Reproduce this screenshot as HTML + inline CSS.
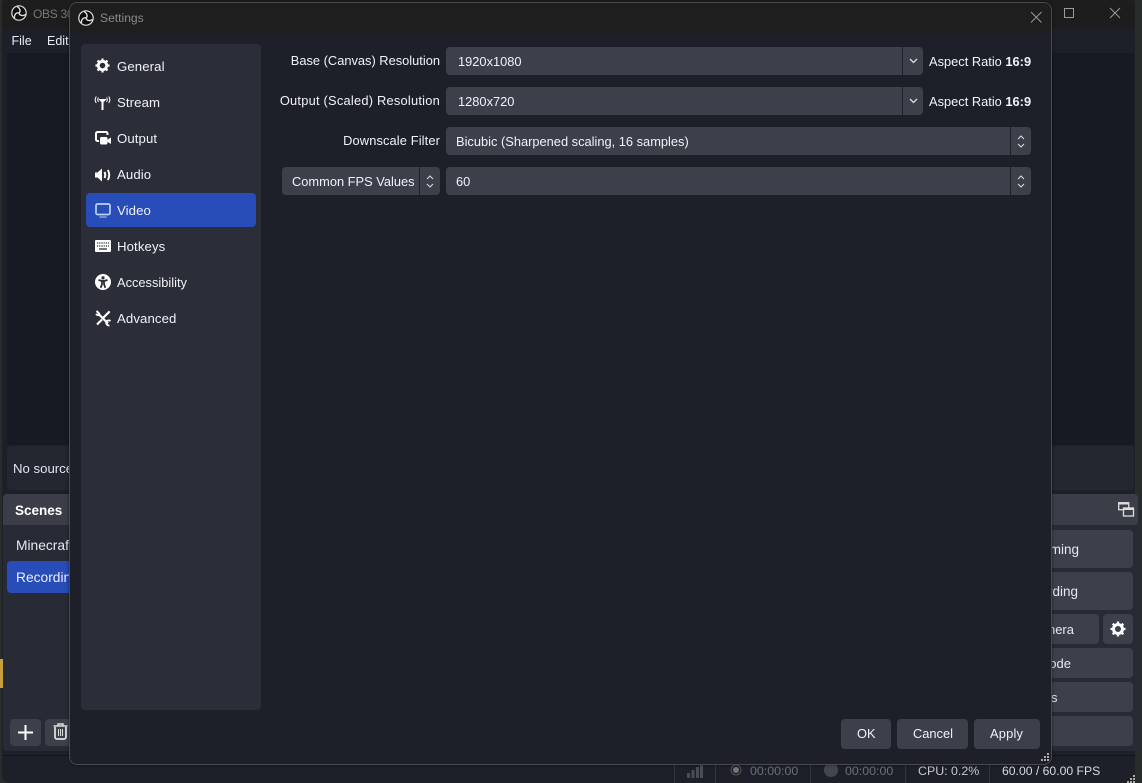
<!DOCTYPE html>
<html><head><meta charset="utf-8"><style>
html,body{margin:0;padding:0;background:#262d2b}
#r{position:relative;width:1142px;height:783px;overflow:hidden;background:#262d2b;font-family:"Liberation Sans",sans-serif;font-size:12.85px;color:#fff}
.a{position:absolute;white-space:nowrap}
.b{position:absolute;background:#3c404b;border-radius:4px}
.t{position:absolute;white-space:nowrap;line-height:18px}
.s{font-size:13.200px;letter-spacing:.1px}
svg{position:absolute;overflow:visible}
</style></head><body><div id="r">
<!-- main window -->
<div class="a" style="left:2px;top:-6px;width:1133px;height:789px;background:#1e2029;border-radius:8px"></div>
<div class="a" style="left:2px;top:0;width:1133px;height:29px;background:#1d1d1d;border-radius:8px 8px 0 0"></div>
<svg style="left:11px;top:5px" width="16" height="16" viewBox="0 0 16 16"><circle cx="8" cy="8" r="7.200" fill="#0e0e0e" stroke="#ddd" stroke-width="1.200"/><g fill="none" stroke="#ddd" stroke-width="1.400"><path d="M8 8C9.800 6.500 9.500 3.500 6 1.500"/><path transform="rotate(120 8 8)" d="M8 8C9.800 6.500 9.500 3.500 6 1.500"/><path transform="rotate(240 8 8)" d="M8 8C9.800 6.500 9.500 3.500 6 1.500"/></g></svg>
<div class="t" style="left:33px;top:5px;color:#777;font-size:12px;letter-spacing:-.3px">OBS 30</div>
<div class="t" style="left:11.500px;top:32px;color:#e8ecf5;font-size:12.500px">File</div>
<div class="t" style="left:47px;top:32px;color:#e8ecf5;font-size:12.500px">Edit</div>
<div class="a" style="left:7px;top:53px;width:1127px;height:392px;background:#171923"></div>
<svg style="left:1064px;top:8px" width="60" height="12"><rect x="0.500" y="0.500" width="9" height="9" fill="none" stroke="#999"/><path d="M46 0l10 10M56 0l-10 10" stroke="#999" fill="none"/></svg>
<div class="a" style="left:7px;top:446px;width:1127px;height:44px;background:#242630;border-radius:4px"></div>
<div class="t" style="left:13px;top:460px;color:#dfe6f5;font-size:13.200px">No source</div>
<!-- scenes dock -->
<div class="a" style="left:3px;top:494px;width:100px;height:257px;background:#282a35;border-radius:4px"></div>
<div class="a" style="left:3px;top:494px;width:100px;height:31px;background:#3b3e49;border-radius:4px 4px 0 0"></div>
<div class="t" style="left:15px;top:502px;font-weight:bold;font-size:13.500px">Scenes</div>
<div class="t" style="left:16px;top:537px;color:#e6e8ef;font-size:13.800px">Minecraft</div>
<div class="a" style="left:7px;top:561px;width:80px;height:32px;background:#284cb8;border-radius:4px"></div>
<div class="t" style="left:16px;top:569px;color:#e8eeff;font-size:13.800px">Recording</div>
<div class="b" style="left:10px;top:719px;width:31px;height:27px"></div>
<svg style="left:18px;top:725px" width="15" height="15"><path d="M7.500 0v15M0 7.500h15" stroke="#fff" stroke-width="2"/></svg>
<div class="b" style="left:45px;top:719px;width:31px;height:27px"></div>
<svg style="left:53px;top:723px" width="15" height="17" fill="none" stroke="#ddd"><path d="M0.500 3h14M5 3V1h5v2" stroke-width="1.500"/><path d="M2 4v10a2 2 0 0 0 2 2h7a2 2 0 0 0 2-2V4" stroke-width="1.800"/><path d="M5.500 6v7M7.500 6v7M9.500 6v7"/></svg>
<div class="a" style="left:0;top:659px;width:3px;height:29px;background:#c7a23c"></div>
<!-- controls dock -->
<div class="a" style="left:1000px;top:494px;width:138px;height:257px;background:#282a35;border-radius:4px"></div>
<div class="a" style="left:1000px;top:494px;width:138px;height:31px;background:#3b3e49;border-radius:4px"></div>
<svg style="left:1118px;top:502px" width="16" height="16" fill="none" stroke="#ddd" stroke-width="1.300"><rect x="0.700" y="0.700" width="10" height="7"/><rect x="5.500" y="6" width="10" height="8" fill="#3b3e49"/><path d="M0.700 1.500h10M5.500 7h10" stroke-width="2"/></svg>
<div class="b" style="left:1000px;top:530px;width:133px;height:38px"></div>
<div class="t" style="right:63px;top:541px;color:#e6e8ef;font-size:13.500px">ming</div>
<div class="b" style="left:1000px;top:572px;width:133px;height:38px"></div>
<div class="t" style="right:64px;top:583px;color:#e6e8ef;font-size:13.500px">rding</div>
<div class="b" style="left:1000px;top:614px;width:99px;height:30px"></div>
<div class="t" style="right:68px;top:621px;color:#e6e8ef;font-size:13px">nera</div>
<div class="b" style="left:1103px;top:614px;width:30px;height:30px"></div>
<svg style="left:1110px;top:621px" width="16" height="16" viewBox="0 0 16 16"><circle cx="8" cy="8" r="4.500" fill="none" stroke="#fff" stroke-width="3"/><path d="M8 0.500v15M0.500 8h15M2.700 2.700l10.600 10.600M13.300 2.700L2.700 13.300" stroke="#fff" stroke-width="2.300" stroke-dasharray="2.500 10 2.500"/></svg>
<div class="b" style="left:1000px;top:648px;width:133px;height:30px"></div>
<div class="t" style="right:71px;top:655px;color:#e6e8ef;font-size:13px">ode</div>
<div class="b" style="left:1000px;top:682px;width:133px;height:30px"></div>
<div class="t" style="left:1051px;top:689px;color:#e6e8ef;font-size:13px">s</div>
<div class="b" style="left:1000px;top:716px;width:133px;height:30px"></div>
<!-- status bar -->
<div class="a" style="left:2px;top:755px;width:1133px;height:1px;background:#14151b"></div>
<div class="a" style="left:674px;top:764px;width:1px;height:19px;background:#33353f"></div>
<div class="a" style="left:715px;top:764px;width:1px;height:19px;background:#33353f"></div>
<div class="a" style="left:810px;top:764px;width:1px;height:19px;background:#33353f"></div>
<div class="a" style="left:905px;top:764px;width:1px;height:19px;background:#33353f"></div>
<div class="a" style="left:989px;top:764px;width:1px;height:19px;background:#33353f"></div>
<svg style="left:687px;top:764px" width="16" height="14" fill="#4b4d55"><rect x="0" y="9" width="3" height="5"/><rect x="4.500" y="6" width="3" height="8"/><rect x="9" y="3" width="3" height="11"/><rect x="13" y="0" width="3" height="14"/></svg>
<svg style="left:729px;top:763px" width="14" height="14" fill="none" stroke="#555"><circle cx="7" cy="7" r="3" fill="#777" stroke="none"/><circle cx="7" cy="7" r="5"/></svg>
<div class="t" style="left:750px;top:762px;color:#6d6f77;font-size:12.400px">00:00:00</div>
<div class="a" style="left:824px;top:763px;width:14px;height:14px;border-radius:50%;background:#44464e"></div>
<div class="t" style="left:845px;top:762px;color:#6d6f77;font-size:12.400px">00:00:00</div>
<div class="t" style="left:918px;top:762px;color:#c6c8ce;font-size:12.400px">CPU: 0.2%</div>
<div class="t" style="left:1002px;top:762px;color:#d8dae0;font-size:12.200px">60.00 / 60.00 FPS</div>
<svg style="left:1127px;top:775px" width="8" height="8" fill="#aaa"><rect x="6" y="0" width="2" height="2"/><rect x="3" y="3" width="2" height="2"/><rect x="6" y="3" width="2" height="2"/><rect x="0" y="6" width="2" height="2"/><rect x="3" y="6" width="2" height="2"/><rect x="6" y="6" width="2" height="2"/></svg>
<!-- settings dialog -->
<div class="a" style="left:69px;top:2px;width:981px;height:761px;background:#1e2029;border:1px solid #484a50;border-radius:8px;overflow:hidden;box-shadow:0 0 3px rgba(0,0,0,.5)"><div style="height:31px;background:#1e1e1e"></div></div>
<svg style="left:78px;top:10px" width="16" height="16" viewBox="0 0 16 16"><circle cx="8" cy="8" r="7.200" fill="#0e0e0e" stroke="#ddd" stroke-width="1.200"/><g fill="none" stroke="#ddd" stroke-width="1.400"><path d="M8 8C9.800 6.500 9.500 3.500 6 1.500"/><path transform="rotate(120 8 8)" d="M8 8C9.800 6.500 9.500 3.500 6 1.500"/><path transform="rotate(240 8 8)" d="M8 8C9.800 6.500 9.500 3.500 6 1.500"/></g></svg>
<div class="t" style="left:100px;top:9px;color:#8a8a8a;font-size:12.100px">Settings</div>
<svg style="left:1031px;top:12px" width="11" height="11"><path d="M0 0l10.500 10.500M10.500 0L0 10.500" stroke="#999" fill="none"/></svg>
<!-- sidebar -->
<div class="a" style="left:81px;top:44px;width:180px;height:666px;background:#2b2d38;border-radius:4px"></div>
<div class="a" style="left:86px;top:193px;width:170px;height:34px;background:#284cb8;border-radius:4px"></div>
<div class="t s" style="left:117px;top:58px;color:#f0f2f8">General</div>
<div class="t s" style="left:117px;top:94px;color:#f0f2f8">Stream</div>
<div class="t s" style="left:117px;top:130px;color:#f0f2f8">Output</div>
<div class="t s" style="left:117px;top:166px;color:#f0f2f8">Audio</div>
<div class="t s" style="left:117px;top:202px;color:#f0f2f8">Video</div>
<div class="t s" style="left:117px;top:238px;color:#f0f2f8">Hotkeys</div>
<div class="t" style="left:117px;top:274px;color:#f0f2f8">Accessibility</div>
<div class="t s" style="left:117px;top:310px;color:#f0f2f8">Advanced</div>
<svg style="left:95px;top:58px" width="15" height="15" viewBox="0 0 16 16"><circle cx="8" cy="8" r="4.500" fill="none" stroke="#fff" stroke-width="3"/><path d="M8 0.500v15M0.500 8h15M2.700 2.700l10.600 10.600M13.300 2.700L2.700 13.300" stroke="#fff" stroke-width="2.300" stroke-dasharray="2.500 10 2.500"/></svg>
<svg style="left:95px;top:96px" width="15" height="14" viewBox="0 0 15 14" fill="none" stroke="#fff"><path d="M7.500 4v10" stroke-width="2"/><path d="M4.500 3.500l3 3 3-3z" fill="#fff" stroke-width="1"/><path d="M3.500 1.500c-1 1.300-1 3 0 4.300M11.500 1.500c1 1.300 1 3 0 4.300M1.300 .5c-1.400 2-1.400 4.500 0 6.500M13.700 .5c1.400 2 1.400 4.500 0 6.500" stroke-width="1"/></svg>
<svg style="left:95px;top:131px" width="16" height="15" viewBox="0 0 16 15" fill="none"><path d="M12.500 4V2.500a1.500 1.500 0 0 0-1.500-1.500H2.500A1.500 1.500 0 0 0 1 2.500V8.500a1.500 1.500 0 0 0 1.500 1.500H4" stroke="#fff" stroke-width="2"/><rect x="5" y="6" width="7.500" height="7.500" rx="1.500" fill="#fff"/><path d="M12 9l4-2.500v6.500l-4-2.500z" fill="#fff"/></svg>
<svg style="left:95px;top:168px" width="16" height="14" viewBox="0 0 16 14" fill="#fff"><path d="M0 4.500h2.500L7 .5v13L2.500 9.500H0z"/><path d="M9.500 4c1 2 1 4 0 6M12.800 2c1.900 3 1.900 7 0 10" fill="none" stroke="#fff" stroke-width="2"/></svg>
<svg style="left:95px;top:203px" width="16" height="15" viewBox="0 0 16 15" fill="none" stroke="#b9d2f5"><rect x="1" y="1" width="14" height="10.500" rx="1.500" stroke-width="1.700"/><path d="M4.500 14h7" stroke-width="1"/></svg>
<svg style="left:95px;top:240px" width="16" height="12" viewBox="0 0 16 12"><rect width="16" height="12" rx="1" fill="#fff"/><path d="M2 3h12M2 6h12" stroke="#2b2d38" stroke-width="1.300" stroke-dasharray="1.200 1"/><path d="M4 9h8" stroke="#2b2d38" stroke-width="1.300"/></svg>
<svg style="left:95px;top:274px" width="16" height="16" viewBox="0 0 16 16"><circle cx="8" cy="8" r="8" fill="#fff"/><circle cx="8" cy="3.800" r="1.600" fill="#2b2d38"/><path d="M3.500 6l3 .8h3l3-.8M7 7v3l-1.300 3.800M9 7v3l1.300 3.800" fill="none" stroke="#2b2d38" stroke-width="1.800"/></svg>
<svg style="left:95px;top:310px" width="16" height="16" viewBox="0 0 16 16" fill="none" stroke="#fff"><path d="M4 4.500L13 13.500" stroke-width="2.200"/><path d="M1 4a3.300 3.300 0 0 0 4.500.5M1.500 1l3 3" stroke-width="2"/><path d="M14.500 1.500L7.500 8.500M7 9.500L2 14.500" stroke-width="2.200"/><path d="M15 1l-2 .5-.5 2 1.500 .5z" fill="#fff" stroke="none"/><path d="M15.500 11a3.200 3.200 0 0 0-4.500 1 3.200 3.200 0 0 0 3.500 3.500" stroke-width="1.800"/></svg>
<!-- form -->
<div class="t" style="right:702px;top:52px;color:#f0f2f8">Base (Canvas) Resolution</div>
<div class="t" style="right:702px;top:92px;color:#f0f2f8;letter-spacing:.23px">Output (Scaled) Resolution</div>
<div class="t" style="right:702px;top:132px;color:#f0f2f8;letter-spacing:.12px">Downscale Filter</div>
<div class="b" style="left:446px;top:47px;width:477px;height:28px"></div>
<div class="b" style="left:446px;top:87px;width:477px;height:28px"></div>
<div class="b" style="left:446px;top:127px;width:585px;height:28px"></div>
<div class="b" style="left:446px;top:167px;width:585px;height:28px"></div>
<div class="b" style="left:282px;top:167px;width:158px;height:28px"></div>
<div class="a" style="left:902px;top:47px;width:1px;height:28px;background:#1e2029"></div>
<div class="a" style="left:902px;top:87px;width:1px;height:28px;background:#1e2029"></div>
<div class="a" style="left:1010px;top:127px;width:1px;height:28px;background:#1e2029"></div>
<div class="a" style="left:1010px;top:167px;width:1px;height:28px;background:#1e2029"></div>
<div class="a" style="left:419px;top:167px;width:1px;height:28px;background:#1e2029"></div>
<div class="t" style="left:458px;top:53px;color:#f0f2f8">1920x1080</div>
<div class="t" style="left:458px;top:93px;color:#f0f2f8">1280x720</div>
<div class="t" style="left:456px;top:133px;color:#f0f2f8">Bicubic (Sharpened scaling, 16 samples)</div>
<div class="t" style="left:456px;top:173px;color:#f0f2f8">60</div>
<div class="t" style="left:292px;top:173px;color:#f0f2f8">Common FPS Values</div>
<svg style="left:909px;top:58px" width="9" height="6" fill="none" stroke="#ddd" stroke-width="1.300"><path d="M1 1l3.500 3.500L8 1"/></svg>
<svg style="left:909px;top:98px" width="9" height="6" fill="none" stroke="#ddd" stroke-width="1.300"><path d="M1 1l3.500 3.500L8 1"/></svg>
<svg style="left:1017px;top:135px" width="8" height="13" fill="none" stroke="#ddd"><path d="M1 4l3-3 3 3M1 9l3 3 3-3"/></svg>
<svg style="left:1017px;top:175px" width="8" height="13" fill="none" stroke="#ddd"><path d="M1 4l3-3 3 3M1 9l3 3 3-3"/></svg>
<svg style="left:426px;top:175px" width="8" height="13" fill="none" stroke="#ddd"><path d="M1 4l3-3 3 3M1 9l3 3 3-3"/></svg>
<div class="t" style="left:929px;top:53px;color:#f0f2f8">Aspect Ratio <b>16:9</b></div>
<div class="t" style="left:929px;top:93px;color:#f0f2f8">Aspect Ratio <b>16:9</b></div>
<!-- buttons -->
<div class="b" style="left:841px;top:719px;width:50px;height:30px"></div>
<div class="b" style="left:897px;top:719px;width:71px;height:30px"></div>
<div class="b" style="left:974px;top:719px;width:66px;height:30px"></div>
<div class="t" style="left:857px;top:725px;color:#f0f2f8">OK</div>
<div class="t" style="left:913px;top:725px;color:#f0f2f8">Cancel</div>
<div class="t" style="left:990px;top:725px;color:#f0f2f8;letter-spacing:.2px">Apply</div>
<svg style="left:1041px;top:753px" width="8" height="8" fill="#aaa"><rect x="6" y="0" width="2" height="2"/><rect x="3" y="3" width="2" height="2"/><rect x="6" y="3" width="2" height="2"/><rect x="0" y="6" width="2" height="2"/><rect x="3" y="6" width="2" height="2"/><rect x="6" y="6" width="2" height="2"/></svg>
</div></body></html>
